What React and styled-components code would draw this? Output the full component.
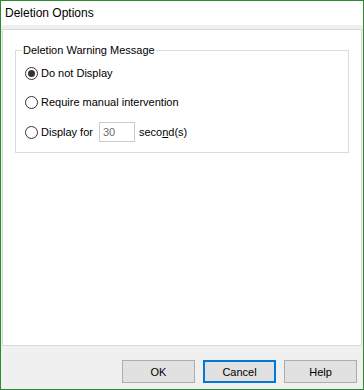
import styled, { createGlobalStyle } from "styled-components";

const GlobalStyle = createGlobalStyle`
  html, body {
    margin: 0;
    padding: 0;
    background: #ffffff;
  }
  * {
    box-sizing: border-box;
  }
`

const Window = styled.div`
  width: 364px;
  height: 390px;
  border: 1px solid #2b8a2b;
  background: #f0f0f0;
  display: flex;
  flex-direction: column;
  font-family: "Liberation Sans", Arial, sans-serif;
  font-size: 11px;
  color: #000000;
`

const TitleBar = styled.div`
  height: 24px;
  flex-shrink: 0;
  background: #ffffff;
  display: flex;
  align-items: center;
  padding-left: 4px;
  font-size: 12px;
`

const Panel = styled.div`
  flex: 1;
  margin: 4px 1px 0 1px;
  background: #ffffff;
  border: 1px solid #d9d9d9;
  padding: 20px 0 0 12px;
`

const GroupBox = styled.div`
  position: relative;
  width: 334px;
  height: 103px;
  border: 1px solid #dcdcdc;
  padding: 12px 0 0 9px;
  display: flex;
  flex-direction: column;
  gap: 9px;
`

const Legend = styled.span`
  position: absolute;
  top: -9px;
  left: 6px;
  padding: 0 1px;
  background: #ffffff;
  line-height: 16px;
`

const Row = styled.label`
  height: 20px;
  display: flex;
  align-items: center;
  margin-top: ${p => p.$extra || 0}px;
`

const Radio = styled.span`
  width: 13px;
  height: 13px;
  border-radius: 50%;
  border: 1px solid #333333;
  background: #ffffff;
  display: flex;
  align-items: center;
  justify-content: center;
  margin-right: 3px;
  flex-shrink: 0;

  &::after {
    content: "";
    display: ${p => (p.$checked ? "block" : "none")};
    width: 7px;
    height: 7px;
    border-radius: 50%;
    background: #333333;
  }
`

const SecondsInput = styled.div`
  width: 36px;
  height: 20px;
  border: 1px solid #cccccc;
  background: #ffffff;
  color: #6d6d6d;
  padding-left: 3px;
  display: flex;
  align-items: center;
  margin: 0 4px 0 6px;
`

const Footer = styled.div`
  height: 43px;
  flex-shrink: 0;
  display: flex;
  justify-content: flex-end;
  align-items: flex-start;
  gap: 8px;
  padding: 14px 6px 0 0;
`

const Button = styled.div`
  width: 73px;
  height: 23px;
  background: #e1e1e1;
  border: ${p => (p.$focused ? "2px solid #0078d7" : "1px solid #adadad")};
  display: flex;
  align-items: center;
  justify-content: center;
`

export default function App() {
  return (
    <>
      <GlobalStyle />
      <Window>
        <TitleBar>Deletion Options</TitleBar>
        <Panel>
          <GroupBox>
            <Legend>Deletion Warning Message</Legend>
            <Row>
              <Radio $checked />
              Do not Display
            </Row>
            <Row>
              <Radio />
              Require manual intervention
            </Row>
            <Row $extra={1}>
              <Radio />
              Display for
              <SecondsInput>30</SecondsInput>
              seco<u>n</u>d(s)
            </Row>
          </GroupBox>
        </Panel>
        <Footer>
          <Button>OK</Button>
          <Button $focused>Cancel</Button>
          <Button>Help</Button>
        </Footer>
      </Window>
    </>
  );
}
